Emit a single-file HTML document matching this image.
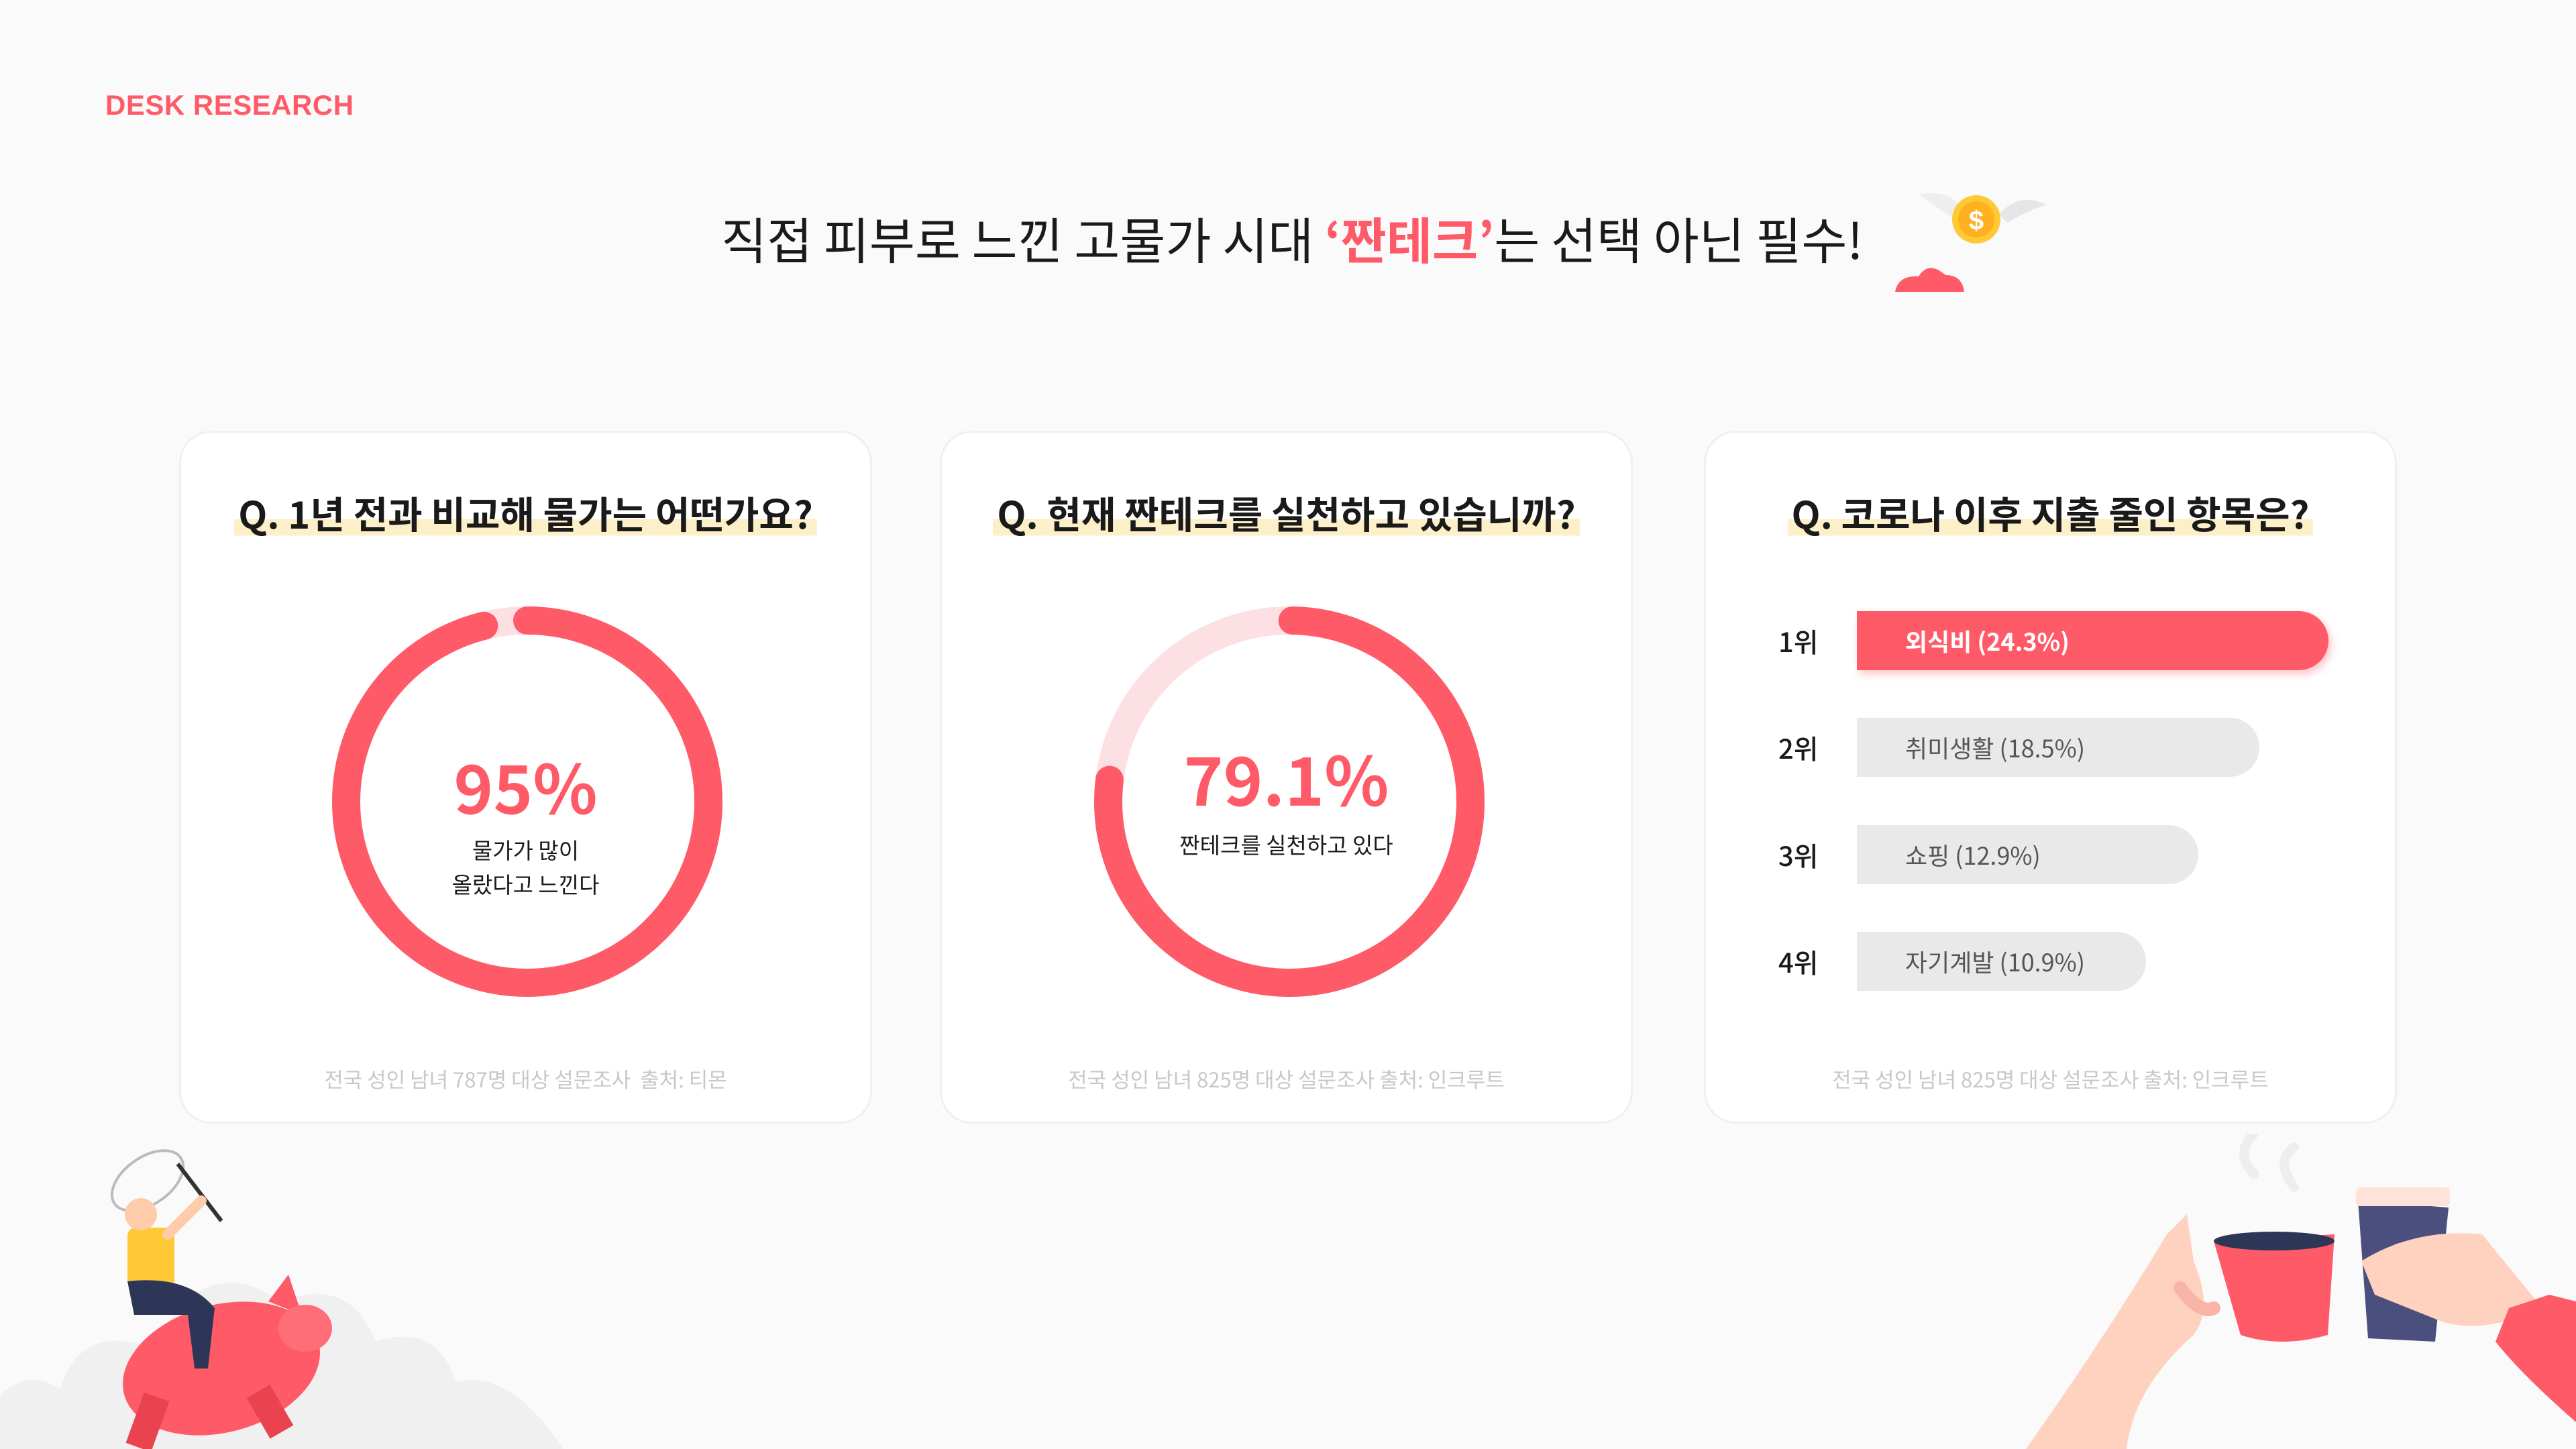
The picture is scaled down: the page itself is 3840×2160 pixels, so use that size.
<!DOCTYPE html>
<html><head><meta charset="utf-8"><style>
*{margin:0;padding:0;box-sizing:border-box}
body{width:3840px;height:2160px;background:#fafafa;position:relative;overflow:hidden;font-family:"Liberation Sans","Noto Sans CJK KR",sans-serif;color:#1a1a1a}
.abs{position:absolute}
.card{position:absolute;top:642px;width:1033px;height:1033px;background:#fff;border:3px solid #f0f0f0;border-radius:48px}
.q{position:absolute;top:80px;left:0;right:0;text-align:center;font-family:"Noto Sans CJK KR",sans-serif;font-weight:700;font-size:56px;line-height:80px}
.q span{background:linear-gradient(transparent 62%,#fdefc8 62%,#fdefc8 92%,transparent 92%);padding:0 6px}
.foot{position:absolute;top:940px;left:0;right:0;text-align:center;font-family:"Noto Sans CJK KR",sans-serif;font-size:31px;color:#c8c8c8}
.big{position:absolute;left:0;right:0;text-align:center;font-family:"Noto Sans CJK KR",sans-serif;font-weight:700;color:#ff5a68;font-size:100px;line-height:110px}
.sub{position:absolute;left:0;right:0;text-align:center;font-family:"Noto Sans CJK KR",sans-serif;font-size:33px;line-height:51px}
.rk{position:absolute;left:108px;font-family:"Noto Sans CJK KR",sans-serif;font-size:40px;font-weight:500;line-height:88px}
.bar{position:absolute;left:225px;height:88px;border-radius:0 44px 44px 0;background:#e9e9e9;color:#555;font-family:"Noto Sans CJK KR",sans-serif;font-size:36px;line-height:88px;padding-left:72px}
</style></head><body>
<div class="abs" style="left:157px;top:133px;font-size:42px;font-weight:700;color:#ff5a68;letter-spacing:0.5px">DESK RESEARCH</div>
<div class="abs" style="left:1075px;top:305px;font-family:'Noto Sans CJK KR',sans-serif;font-size:74px;line-height:100px;white-space:nowrap">직접 피부로 느낀 고물가 시대 <b style="color:#ff5a68">‘짠테크’</b>는 선택 아닌 필수!</div>
<svg class="abs" style="left:2820px;top:270px" width="260" height="180" viewBox="0 0 260 180">
<path d="M40 20 Q90 10 112 50 L100 62 Q70 40 40 20Z" fill="#eee"/>
<path d="M230 35 Q190 15 160 50 L172 62 Q200 45 230 35Z" fill="#e6e6e6"/>
<circle cx="126" cy="57" r="36" fill="#ffc935"/><circle cx="126" cy="57" r="27" fill="#ffb020"/>
<text x="126" y="72" text-anchor="middle" font-size="40" font-weight="700" fill="#fff" font-family="Liberation Sans">$</text>
<path d="M5 165 Q10 140 40 142 Q55 118 80 140 Q105 140 108 165Z" fill="#ff5a68"/>
</svg>

<div class="card" style="left:267px">
<div class="q"><span>Q. 1년 전과 비교해 물가는 어떤가요?</span></div>
<svg class="abs" style="left:216px;top:250px" width="600" height="600" viewBox="0 0 600 600">
<circle cx="300" cy="300" r="270" fill="none" stroke="#fde0e3" stroke-width="42"/>
<circle cx="300" cy="300" r="270" fill="none" stroke="#ff5a68" stroke-width="42" stroke-linecap="round" stroke-dasharray="1631 2000" transform="rotate(-90 300 300)"/>
</svg>
<div class="big" style="top:470px">95%</div>
<div class="sub" style="top:596px">물가가 많이<br>올랐다고 느낀다</div>
<div class="foot">전국 성인 남녀 787명 대상 설문조사 &nbsp;출처: 티몬</div>
</div>

<div class="card" style="left:1401px">
<div class="q"><span>Q. 현재 짠테크를 실천하고 있습니까?</span></div>
<svg class="abs" style="left:218px;top:250px" width="600" height="600" viewBox="0 0 600 600">
<circle cx="300" cy="300" r="270" fill="none" stroke="#fde0e3" stroke-width="42"/>
<circle cx="300" cy="300" r="270" fill="none" stroke="#ff5a68" stroke-width="42" stroke-linecap="round" stroke-dasharray="1300 2000" transform="rotate(-89 300 300)"/>
</svg>
<div class="big" style="top:458px">79.1%</div>
<div class="sub" style="top:588px">짠테크를 실천하고 있다</div>
<div class="foot">전국 성인 남녀 825명 대상 설문조사 출처: 인크루트</div>
</div>

<div class="card" style="left:2540px">
<div class="q"><span>Q. 코로나 이후 지출 줄인 항목은?</span></div>
<div class="rk" style="top:266px">1위</div>
<div class="bar" style="top:266px;width:703px;background:#ff5a68;color:#fff;font-weight:700;box-shadow:4px 6px 12px rgba(255,90,104,.35)">외식비 (24.3%)</div>
<div class="rk" style="top:425px">2위</div>
<div class="bar" style="top:425px;width:600px">취미생활 (18.5%)</div>
<div class="rk" style="top:585px">3위</div>
<div class="bar" style="top:585px;width:509px">쇼핑 (12.9%)</div>
<div class="rk" style="top:744px">4위</div>
<div class="bar" style="top:744px;width:431px">자기계발 (10.9%)</div>
<div class="foot">전국 성인 남녀 825명 대상 설문조사 출처: 인크루트</div>
</div>

<svg class="abs" style="left:0;top:1640px" width="860" height="520" viewBox="0 0 860 520">
<path d="M0 520 L0 440 Q40 400 90 430 Q120 330 230 370 Q300 220 420 300 Q520 260 560 360 Q650 330 680 420 Q760 400 840 520Z" fill="#f0f0f0"/>
<ellipse cx="220" cy="120" rx="60" ry="35" fill="none" stroke="#bbb" stroke-width="4" transform="rotate(-35 220 120)"/>
<line x1="265" y1="95" x2="330" y2="180" stroke="#333" stroke-width="6"/>
<ellipse cx="330" cy="400" rx="150" ry="95" fill="#ff5a68" transform="rotate(-15 330 400)"/>
<path d="M400 300 L430 260 L450 320Z" fill="#ff5a68"/>
<ellipse cx="455" cy="340" rx="40" ry="35" fill="#ff6e78"/>
<rect x="200" y="440" width="40" height="80" fill="#e8434f" transform="rotate(20 220 480)"/>
<rect x="380" y="430" width="40" height="70" fill="#e8434f" transform="rotate(-30 400 460)"/>
<rect x="190" y="190" width="70" height="90" rx="12" fill="#ffc935"/>
<circle cx="210" cy="170" r="24" fill="#ffccaa"/>
<path d="M190 270 Q280 260 320 310 L310 400 L290 400 L280 320 L200 320Z" fill="#2d3657"/>
<path d="M250 200 L300 150" stroke="#ffccaa" stroke-width="16" stroke-linecap="round"/>
</svg>

<svg class="abs" style="left:3000px;top:1690px" width="840" height="470" viewBox="0 0 840 470">
<path d="M20 470 Q140 300 230 150 L260 120 L270 190 Q300 260 270 300 Q180 380 170 470Z" fill="#ffd2c0"/>
<path d="M300 160 L480 150 L470 300 Q400 320 340 300Z" fill="#ff5a68"/>
<ellipse cx="390" cy="160" rx="90" ry="14" fill="#2d3657"/>
<path d="M250 230 Q280 270 300 260" stroke="#f8b4a6" stroke-width="20" fill="none" stroke-linecap="round"/>
<path d="M515 100 L650 110 L630 310 L530 305Z" fill="#4b4f7e"/>
<rect x="512" y="80" width="140" height="28" rx="6" fill="#ffe3d8"/>
<circle cx="585" cy="200" r="38" fill="#d6d6e6"/>
<path d="M520 190 Q600 140 700 150 L790 260 Q700 300 640 280 L540 240Z" fill="#ffd2c0"/>
<path d="M740 260 L800 240 L840 250 L840 430 Q760 360 720 310Z" fill="#ff5a68"/>
<path d="M360 60 Q330 30 360 0 M420 80 Q390 40 420 20" stroke="#eee" stroke-width="14" fill="none" stroke-linecap="round"/>
</svg>
</body></html>
